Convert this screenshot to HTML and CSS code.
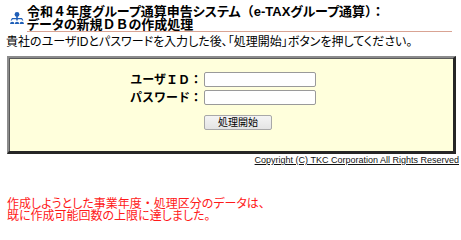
FILE: index.html
```html
<!DOCTYPE html>
<html lang="ja">
<head>
<meta charset="utf-8">
<title>データの新規ＤＢの作成処理</title>
<link rel="stylesheet" href="styles.css">
</head>
<body>
<div class="page">
  <div class="header">
    <svg class="logo" viewBox="0 0 14 12" width="14" height="12" aria-hidden="true">
      <circle cx="7" cy="2.4" r="2.4" fill="#1f5fb8"/>
      <rect x="6.2" y="4" width="1.6" height="2" fill="#1f5fb8"/>
      <path d="M0.6 8.6 L2 6 H12 L13.4 8.6 H12.2 L11.4 7.2 H2.6 L1.8 8.6 Z" fill="#1f5fb8"/>
      <rect x="6.2" y="6.5" width="1.6" height="2" fill="#1f5fb8"/>
      <path d="M0 12 A2.2 2.2 0 0 1 4.4 12 Z" fill="#1f5fb8"/>
      <path d="M4.8 12 A2.2 2.2 0 0 1 9.2 12 Z" fill="#1f5fb8"/>
      <path d="M9.6 12 A2.2 2.2 0 0 1 14 12 Z" fill="#1f5fb8"/>
    </svg>
    <h1 class="title"><span class="line">令和<span class="fw">４</span>年度グループ通算申告システム<span class="fw">（</span>e-TAXグループ通算<span class="fw">）：</span></span><span class="line">データの新規<span class="fw">ＤＢ</span>の作成処理</span></h1>
  </div>
  <p class="lead">貴社のユーザIDとパスワードを入力した後、「処理開始」ボタンを押してください。</p>
  <div class="panel">
    <div class="form">
      <label class="label" for="uid">ユーザＩＤ：</label>
      <input class="field" id="uid" type="text">
      <label class="label" for="pwd">パスワード：</label>
      <input class="field" id="pwd" type="password">
      <button class="submit" type="button">処理開始</button>
    </div>
  </div>
  <div class="copy"><a class="copy-link" href="#">Copyright (C) TKC Corporation All Rights Reserved</a></div>
  <div class="error"><span class="line">作成しようとした事業年度<span class="fw">・</span>処理区分のデータは、</span><span class="line">既に作成可能回数の上限に達しました。</span></div>
</div>
</body>
</html>
```
FILE: styles.css
```css
html, body {
  margin: 0;
  padding: 0;
  background: #ffffff;
}
body {
  font-family: "Liberation Sans", "Noto Sans CJK JP", sans-serif;
  font-feature-settings: "palt";
  color: #000;
}
.fw {
  font-feature-settings: normal;
}
.line {
  display: block;
  white-space: nowrap;
}
.page {
  width: 461px;
}
.header {
  display: flex;
  align-items: flex-start;
  padding-top: 5px;
  margin-right: 9px;
}
.logo {
  display: block;
  margin: 7px 3px 0 10px;
  flex: none;
}
.title {
  flex: 1;
  margin: 0;
  font-size: 13px;
  line-height: 13px;
  font-weight: bold;
  border-bottom: 1px solid #d9a393;
}
.lead {
  margin: 3px 0 0 6px;
  font-size: 12px;
  line-height: 14px;
}
.panel {
  margin: 7px 5px 0 7px;
  background: #ffffdc;
  border-style: solid;
  border-width: 2px 3px 3px 2px;
  border-color: #8c8c8c #262626 #262626 #8c8c8c;
  box-shadow: inset 1px 1px 0 #5a5a5a;
  padding: 14px 0 21px 0;
}
.form {
  display: grid;
  grid-template-columns: 72px 112px;
  column-gap: 2px;
  row-gap: 3px;
  align-items: center;
  margin-left: 121px;
}
.label {
  font-size: 12px;
  line-height: 14px;
  font-weight: bold;
  text-align: right;
  white-space: nowrap;
  font-feature-settings: normal;
}
.field {
  box-sizing: border-box;
  width: 112px;
  height: 15px;
  margin: 0;
  padding: 0 2px;
  border: 1px solid #9a9a9a;
  border-radius: 2px;
  background: #fff;
  font-size: 11px;
}
.submit {
  grid-column: 2;
  justify-self: start;
  box-sizing: border-box;
  width: 68px;
  height: 15px;
  margin-top: 7px;
  padding: 0;
  border: 1px solid #a8a8a8;
  border-radius: 2px;
  background: linear-gradient(#f4f4f4, #e4e4e4);
  font-family: "Liberation Sans", "Noto Sans CJK JP", sans-serif;
  font-feature-settings: "palt";
  font-size: 10px;
  line-height: 13px;
  color: #000;
}
.copy {
  text-align: right;
  padding-right: 2px;
  margin-top: 1px;
  font-family: "Liberation Sans", Arial, sans-serif;
  font-size: 9px;
  line-height: 10px;
}
.copy-link {
  color: #111;
  text-decoration: underline;
}
.error {
  margin: 33px 0 0 7px;
  color: #ff1a1a;
  font-size: 12px;
  line-height: 12px;
}
```
